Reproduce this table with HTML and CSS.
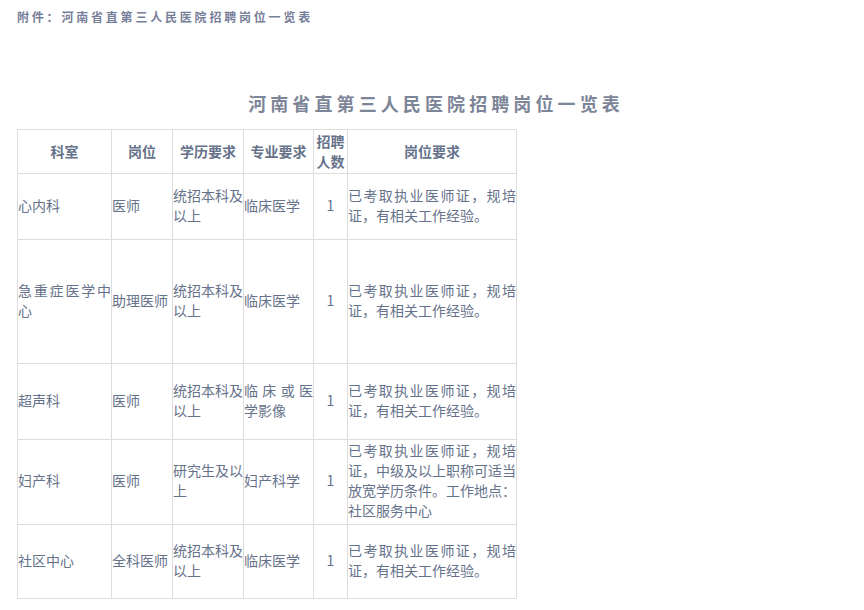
FILE: index.html
```html
<!DOCTYPE html>
<html lang="zh-CN">
<head>
<meta charset="utf-8">
<title>河南省直第三人民医院招聘岗位一览表</title>
<link rel="stylesheet" href="styles.css">
</head>
<body>
<div class="page">
  <p class="note">附件：河南省直第三人民医院招聘岗位一览表</p>
  <h1 class="title">河南省直第三人民医院招聘岗位一览表</h1>
  <table class="jobs">
    <colgroup>
      <col class="c1"><col class="c2"><col class="c3"><col class="c4"><col class="c5"><col class="c6">
    </colgroup>
    <thead>
      <tr class="r-head">
        <th>科室</th><th>岗位</th><th>学历要求</th><th>专业要求</th><th>招聘人数</th><th>岗位要求</th>
      </tr>
    </thead>
    <tbody>
      <tr class="r1">
        <td>心内科</td><td>医师</td><td>统招本科及以上</td><td>临床医学</td><td class="num">1</td><td>已考取执业医师证，规培证，有相关工作经验。</td>
      </tr>
      <tr class="r2">
        <td>急重症医学中心</td><td>助理医师</td><td>统招本科及以上</td><td>临床医学</td><td class="num">1</td><td>已考取执业医师证，规培证，有相关工作经验。</td>
      </tr>
      <tr class="r3">
        <td>超声科</td><td>医师</td><td>统招本科及以上</td><td>临床或医学影像</td><td class="num">1</td><td>已考取执业医师证，规培证，有相关工作经验。</td>
      </tr>
      <tr class="r4">
        <td>妇产科</td><td>医师</td><td>研究生及以上</td><td>妇产科学</td><td class="num">1</td><td>已考取执业医师证，规培证，中级及以上职称可适当放宽学历条件。工作地点：社区服务中心</td>
      </tr>
      <tr class="r5">
        <td>社区中心</td><td>全科医师</td><td>统招本科及以上</td><td>临床医学</td><td class="num">1</td><td>已考取执业医师证，规培证，有相关工作经验。</td>
      </tr>
    </tbody>
  </table>
</div>
</body>
</html>
```

FILE: styles.css
```css
html, body {
  margin: 0;
  padding: 0;
  background: #ffffff;
}

.page {
  font-family: "Noto Sans CJK SC", "Noto Sans", sans-serif;
  color: #66728a;
  padding: 0 0 0 17px;
}

.note {
  margin: 0;
  padding-top: 8px;
  font-size: 12px;
  line-height: 17px;
  font-weight: bold;
  letter-spacing: 2.8px;
  color: #77809a;
}

.title {
  margin: 67px 0 0 -17px;
  padding-left: 8px;
  text-align: center;
  font-size: 18px;
  line-height: 22px;
  font-weight: bold;
  letter-spacing: 4.1px;
  color: #7d8598;
  height: 22px;
}

.jobs {
  margin-top: 15px;
  border-collapse: collapse;
  table-layout: fixed;
  width: 500px;
  font-size: 14px;
  line-height: 20px;
}

.c1 { width: 94px; }
.c2 { width: 61px; }
.c3 { width: 71px; }
.c4 { width: 70px; }
.c5 { width: 34px; }
.c6 { width: 169px; }

.jobs th,
.jobs td {
  border: 1px solid #dddddd;
  padding: 0 0 4px 0;
  vertical-align: middle;
  word-break: break-all;
}

.jobs th {
  padding: 0 0 1px 0;
  text-align: center;
  font-weight: bold;
  color: #66728a;
}

.jobs td {
  text-align: justify;
  text-align-last: left;
}

.jobs td.num {
  text-align: center;
  text-align-last: center;
}

.r-head { height: 44px; }
.r1 { height: 66px; }
.r2 { height: 124px; }
.r3 { height: 76px; }
.r4 { height: 85px; }
.r5 { height: 74px; }
```
